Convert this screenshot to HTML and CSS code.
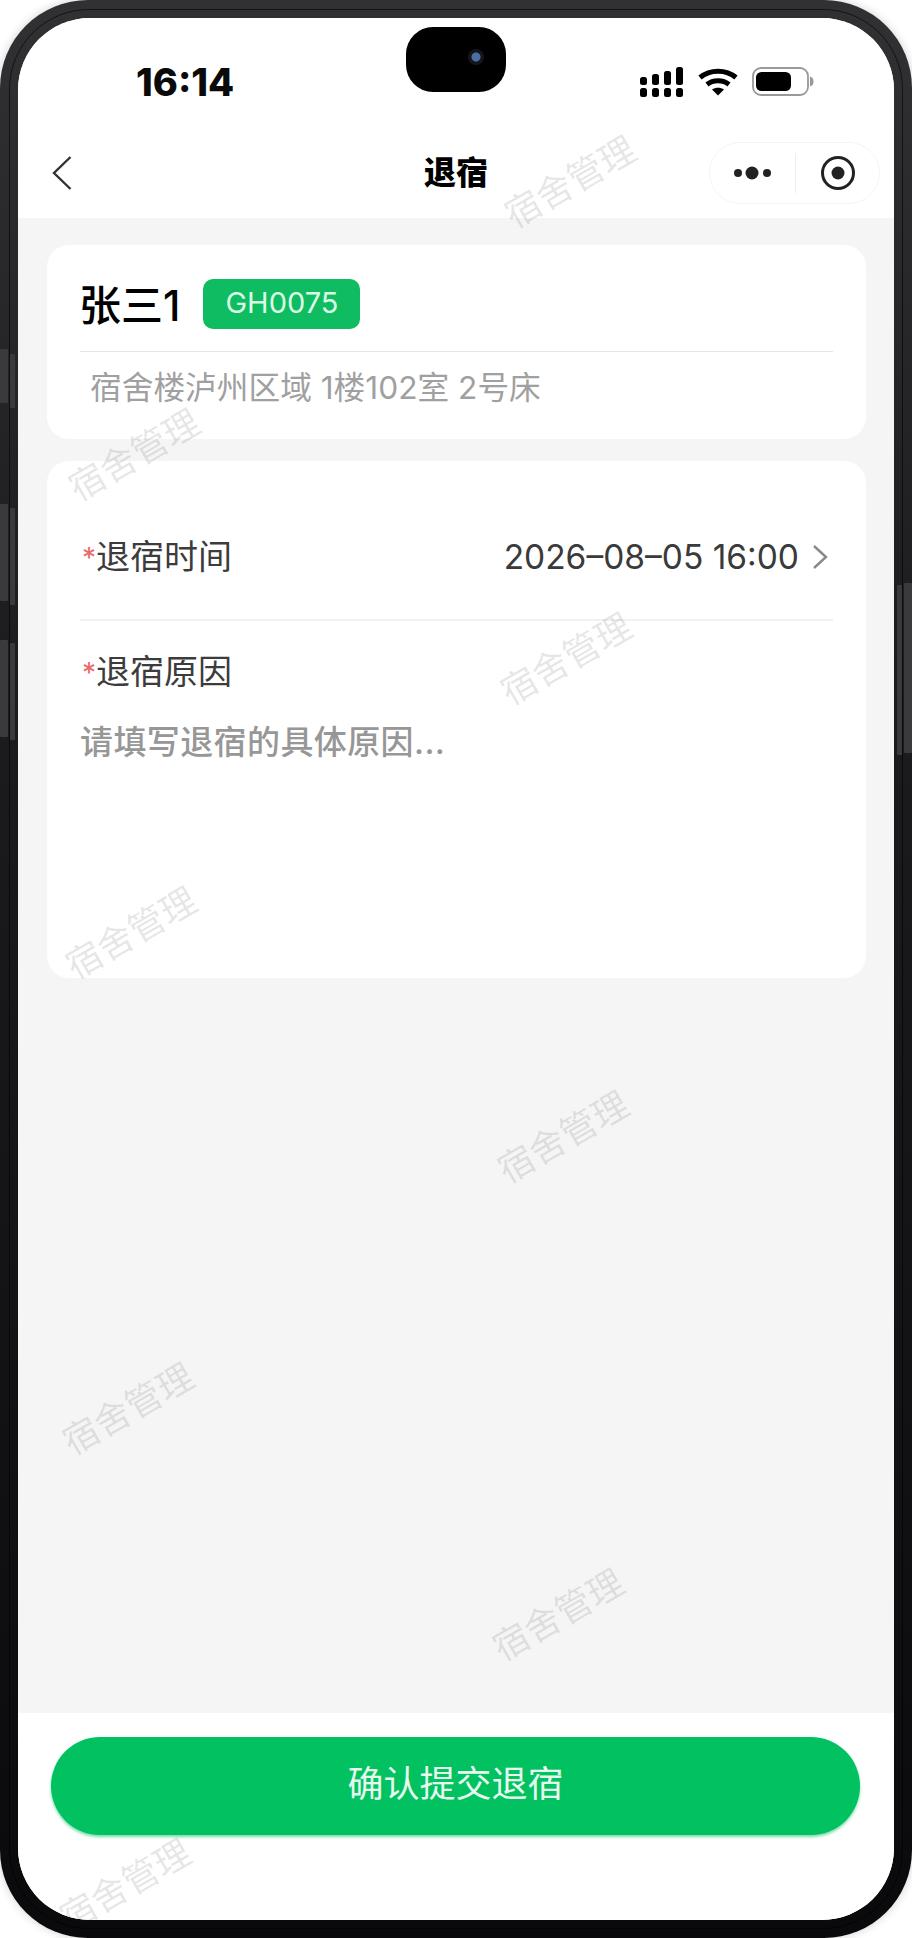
FILE: index.html
```html
<!DOCTYPE html>
<html lang="zh-CN">
<head>
<meta charset="utf-8">
<title>退宿</title>
<link rel="stylesheet" href="styles.css">
</head>
<body>
<div class="phone">
  <span class="key key-a1"></span><span class="key key-a2"></span>
  <span class="key key-b1"></span><span class="key key-b2"></span>
  <span class="key key-c1"></span><span class="key key-c2"></span>
  <span class="key key-d1"></span><span class="key key-d2"></span>
  <div class="screen">
    <header class="top">
      <div class="status">
        <span class="time">16:14</span>
        <div class="status-icons">
          <svg class="ic-signal" width="44" height="31" viewBox="0 0 44 31">
            <g fill="#000">
              <rect x="0" y="10" width="7" height="8" rx="2.5"/><rect x="12" y="7" width="7" height="11" rx="2.5"/><rect x="24" y="4" width="7" height="14" rx="2.5"/><rect x="36" y="0" width="7" height="18" rx="2.5"/>
              <rect x="0" y="21" width="7" height="9" rx="2.5"/><rect x="12" y="21" width="7" height="9" rx="2.5"/><rect x="24" y="21" width="7" height="9" rx="2.5"/><rect x="36" y="21" width="7" height="9" rx="2.5"/>
            </g>
          </svg>
          <svg class="ic-wifi" width="40" height="29" viewBox="0 0 40 29">
            <g fill="none" stroke="#000" stroke-width="5">
              <path d="M2 10.500C12 2 28 2 38 10.500"/>
              <path d="M9 17.500C15 12.600 25 12.600 31 17.500"/>
            </g>
            <path d="M14 22.500C17.500 20 22.500 20 26 22.500L20 28.500Z" fill="#000"/>
          </svg>
          <svg class="ic-battery" width="62" height="29" viewBox="0 0 62 29">
            <rect x="1" y="1" width="55" height="27" rx="8" fill="none" stroke="#999" stroke-width="1.8"/>
            <rect x="4" y="5" width="35" height="19" rx="5.5" fill="#000"/>
            <path d="M58 9.500C60.500 10 61.500 12 61.500 14.500S60.500 19 58 19.500Z" fill="#999"/>
          </svg>
        </div>
      </div>
      <div class="nav">
        <svg class="ic-back" width="22" height="36" viewBox="0 0 22 36"><path d="M19.500 2 3 18l16.500 16" fill="none" stroke="#333" stroke-width="2.4"/></svg>
        <h1 class="title">退宿</h1>
        <div class="capsule">
          <svg class="ic-more" width="46" height="16" viewBox="0 0 46 16"><circle cx="7" cy="8" r="4" fill="#222"/><circle cx="21" cy="8" r="6.500" fill="#222"/><circle cx="36" cy="8" r="4" fill="#222"/></svg>
          <span class="capsule-line"></span>
          <svg class="ic-target" width="36" height="36" viewBox="0 0 36 36"><circle cx="18" cy="18" r="15.500" fill="none" stroke="#222" stroke-width="3"/><circle cx="18" cy="18" r="6.500" fill="#222"/></svg>
        </div>
      </div>
    </header>
    <main class="body">
      <section class="card person">
        <div class="person-head">
          <span class="person-name">张三1</span>
          <span class="badge">GH0075</span>
        </div>
        <p class="person-room">宿舍楼泸州区域 1楼102室 2号床</p>
      </section>
      <section class="card form">
        <div class="row-time">
          <span class="label"><i class="req">*</i>退宿时间</span>
          <span class="row-value">
            <span class="date">2026–08–05 16:00</span>
            <svg class="ic-chev" width="16" height="26" viewBox="0 0 16 26"><path d="M2 2l12 11L2 24" fill="none" stroke="#888" stroke-width="2.400"/></svg>
          </span>
        </div>
        <div class="reason">
          <span class="label"><i class="req">*</i>退宿原因</span>
          <p class="placeholder">请填写退宿的具体原因...</p>
        </div>
      </section>
    </main>
    <footer class="foot">
      <button class="submit" type="button">确认提交退宿</button>
    </footer>
    <div class="marks" aria-hidden="true">
      <span class="mark m0">宿舍管理</span>
      <span class="mark m1">宿舍管理</span>
      <span class="mark m2">宿舍管理</span>
      <span class="mark m3">宿舍管理</span>
      <span class="mark m4">宿舍管理</span>
      <span class="mark m5">宿舍管理</span>
      <span class="mark m6">宿舍管理</span>
      <span class="mark m7">宿舍管理</span>
      <span class="mark m8">宿舍管理</span>
    </div>
    <div class="notch"><span class="lens"></span></div>
  </div>
</div>
</body>
</html>
```
FILE: styles.css
```css
* { box-sizing: border-box; }
html, body { margin: 0; padding: 0; background: #fff; }
body {
  width: 912px;
  height: 1938px;
  overflow: hidden;
  font-family: Inter, "Noto Sans CJK SC", sans-serif;
}
.phone {
  position: relative;
  width: 912px;
  height: 1938px;
  padding: 18px;
  border-radius: 88px;
  background: linear-gradient(180deg, #313133 0%, #1c1c1e 35%, #141416 65%, #0a0a0c 100%);
  box-shadow: 0 0 10px rgba(0, 0, 0, .18);
}
.phone::before {
  content: "";
  position: absolute;
  inset: 9px;
  border: 1px solid rgba(0, 0, 0, .6);
  border-radius: 80px;
}
.key { position: absolute; background: #3a3a3c; border-radius: 1px; }
.key-a1 { left: 0; top: 349px; width: 8px; height: 54px; }
.key-a2 { left: 10px; top: 354px; width: 5px; height: 54px; }
.key-b1 { left: 0; top: 504px; width: 8px; height: 97px; }
.key-b2 { left: 10px; top: 508px; width: 5px; height: 97px; }
.key-c1 { left: 0; top: 640px; width: 8px; height: 97px; }
.key-c2 { left: 10px; top: 643px; width: 5px; height: 97px; }
.key-d1 { right: 0; top: 583px; width: 8px; height: 170px; }
.key-d2 { right: 10px; top: 585px; width: 5px; height: 170px; }

.screen {
  position: relative;
  display: flex;
  flex-direction: column;
  width: 876px;
  height: 1902px;
  overflow: hidden;
  border-radius: 72px;
  background: #fff;
}
.top { height: 200px; background: #fff; }
.status {
  display: flex;
  justify-content: space-between;
  align-items: flex-start;
  height: 110px;
  padding: 42px 80px 0 118px;
}
.time { font-size: 38px; line-height: 44px; font-weight: 800; color: #0a0a0a; }
.status-icons { display: flex; align-items: flex-start; gap: 14px; padding-top: 7px; }
.nav {
  display: grid;
  grid-template-columns: minmax(0, 1fr) auto minmax(0, 1fr);
  align-items: center;
  height: 90px;
  padding: 0 14px;
}
.ic-back { display: block; margin-left: 19px; }
.title {
  margin: 0;
  font-size: 32px;
  line-height: 44px;
  font-weight: 900;
  color: #000;
}
.capsule {
  display: flex;
  align-items: center;
  justify-self: end;
  width: 171px;
  height: 62px;
  padding-left: 21px;
  border: 1px solid #f4f4f4;
  border-radius: 31px;
  background: #fff;
}
.capsule-line { width: 1px; height: 40px; margin-left: 18px; background: #eee; }
.ic-target { margin-left: 24px; }
.ic-more, .ic-target { display: block; }

.body {
  flex: 1;
  display: flex;
  flex-direction: column;
  gap: 22px;
  padding: 27px 28px 0 29px;
  background: #f5f5f5;
}
.card { background: #fff; border-radius: 22px; }
.person { height: 194px; padding: 34px 33px 0; }
.person-head {
  display: flex;
  align-items: center;
  gap: 23px;
  height: 73px;
  border-bottom: 1px solid #e6e6e6;
}
.person-name { font-size: 42px; line-height: 50px; font-weight: 500; color: #000; margin: -19px 0 0 -1px; }
.badge {
  display: block;
  width: 157px;
  height: 50px;
  margin-top: -22px;
  border-radius: 10px;
  background: #0fbc62;
  color: #d9fbe6;
  font-size: 29px;
  line-height: 48px;
  text-align: center;
}
.person-room { margin: 14px 0 0 10px; font-size: 31.700px; line-height: 44px; color: #a0a0a0; white-space: nowrap; }
.form { height: 517px; padding: 0 33px; }
.row-time {
  display: flex;
  align-items: center;
  justify-content: space-between;
  height: 160px;
  padding-top: 34px;
  border-bottom: 2px solid #f1f1f3;
}
.label { font-size: 34px; line-height: 44px; color: #3c3c3c; }
.req { font-style: normal; color: #e86a68; font-size: 28px; margin: 0 0 0 2px; vertical-align: 1px; }
.row-value { display: flex; align-items: center; gap: 13px; padding-right: 5px; }
.date { font-size: 33.500px; line-height: 44px; color: #3a3a3a; white-space: nowrap; }
.ic-chev { display: block; }
.reason { padding-top: 29px; }
.placeholder { margin: 25px 0 0; font-size: 33px; line-height: 44px; color: #979797; font-weight: 500; letter-spacing: .4px; }

.foot { height: 207px; padding: 24px 34px 0 33px; background: #fff; }
.submit {
  display: block;
  width: 100%;
  height: 98px;
  padding: 0 0 10px;
  border: 0;
  border-radius: 49px;
  background: #02c161;
  color: #e6fbee;
  font-family: inherit;
  font-size: 36px;
  box-shadow: 0 2px 3px rgba(2, 193, 97, .55);
}

.marks { position: absolute; inset: 0; pointer-events: none; }
.mark {
  position: absolute;
  width: 160px;
  margin: -24px 0 0 -80px;
  font-size: 36px;
  line-height: 48px;
  text-align: center;
  white-space: nowrap;
  color: rgba(60, 60, 60, .13);
  transform: rotate(-30deg);
}
.m0 { left: 74px; top: -58px; }
.m1 { left: 552px; top: 164px; }
.m2 { left: 116px; top: 437px; }
.m3 { left: 548px; top: 641px; }
.m4 { left: 113px; top: 915px; }
.m5 { left: 545px; top: 1119px; }
.m6 { left: 110px; top: 1391px; }
.m7 { left: 540px; top: 1597px; }
.m8 { left: 107px; top: 1867px; }

.notch {
  position: absolute;
  left: 388px;
  top: 9px;
  display: flex;
  align-items: center;
  justify-content: flex-end;
  width: 100px;
  height: 65px;
  padding-right: 22px;
  border-radius: 27px;
  background: #000;
}
.lens {
  width: 16px;
  height: 16px;
  margin-top: -6px;
  border-radius: 50%;
  background: radial-gradient(circle, #4a6fa5 0 4px, #14161c 5px);
}
```
